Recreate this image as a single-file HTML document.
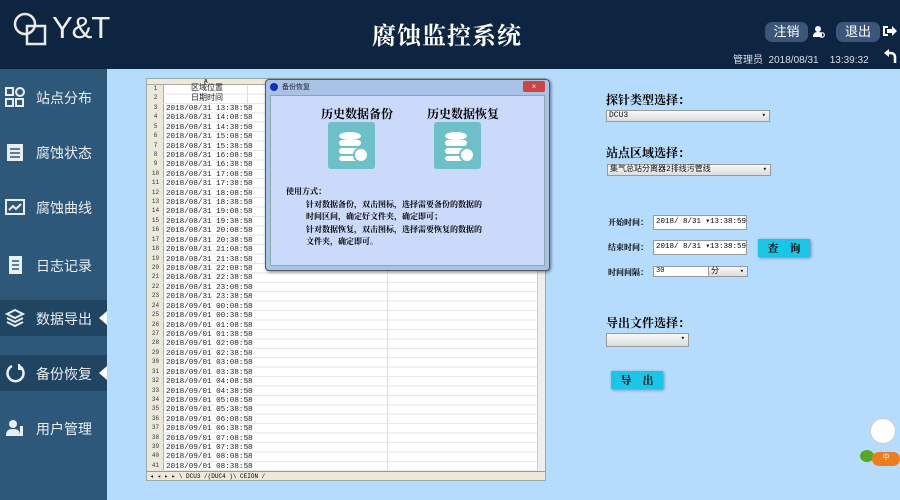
<!DOCTYPE html>
<html><head><meta charset="utf-8"><style>
*{margin:0;padding:0;box-sizing:border-box}
body{width:900px;height:500px;overflow:hidden;position:relative;background:#b5dcfd;font-family:"Liberation Sans","Noto Sans CJK SC",sans-serif}
.hdr{position:absolute;left:0;top:0;width:900px;height:69px;background:#0d2540}
.side{position:absolute;left:0;top:69px;width:107px;height:431px;background:#2d5879}
.item{position:absolute;left:0;width:107px;height:36px;color:#e8eef4;font-size:14px}
.item span{position:absolute;left:36px;top:9px}
.item svg{position:absolute;left:5px;top:8px}
.hl{background:#1f4563}
.arr{position:absolute;right:0;top:11px;width:0;height:0;border-top:7px solid transparent;border-bottom:7px solid transparent;border-right:8px solid #fff}
.sheet{position:absolute;left:146px;top:78px;width:400px;height:403px;background:#fff;border:1px solid #9aa;overflow:hidden}
.dlg{position:absolute;left:265px;top:79px;width:285px;height:192px;background:#a9c3e6;border:1px solid #556;border-radius:4px;box-shadow:1px 1px 3px rgba(0,0,0,.5)}
.dlg .in{position:absolute;left:4px;top:15px;right:4px;bottom:4px;background:#cbd9fb;border:1px solid #8aa}
.ico{position:absolute;width:47px;height:47px;background:#6dbfc8;border-radius:3px}
.lbl{position:absolute;font:bold 12px "Liberation Serif","Noto Serif CJK SC",serif;color:#000;white-space:nowrap}
.sel{position:absolute;height:12px;background:linear-gradient(#f8f8f8,#dcdcdc);border:1px solid #999;font:8px/10px "Liberation Mono","Noto Sans CJK SC",monospace;padding-left:2px;color:#111;white-space:nowrap}
.sel:after{content:"▾";position:absolute;right:3px;top:0;font-size:7px}
.inp{position:absolute;height:15px;background:#fff;border:1px solid #999;font:7.5px/13px "Liberation Mono",monospace;padding-left:2px;white-space:nowrap;overflow:hidden}
.btn{position:absolute;height:18px;background:#19c6e6;box-shadow:1px 1px 3px rgba(0,0,60,.4);font:bold 11px/18px "Noto Serif CJK SC",serif;text-align:center;white-space:nowrap}
.small{position:absolute;font:bold 8px "Noto Serif CJK SC",serif;white-space:nowrap}
pre{font-family:"Liberation Mono","Noto Sans CJK SC",monospace}
</style></head><body>
<div class="hdr">
<svg style="position:absolute;left:13px;top:10px" width="36" height="38" viewBox="0 0 36 38" fill="none" stroke="#e8e8e8" stroke-width="2.5"><circle cx="12" cy="14" r="10"/><rect x="14" y="16" width="18" height="18"/></svg>
<div style="position:absolute;left:52px;top:10px;color:#eee;font-size:31px;letter-spacing:-1px">Y&amp;T</div>
<div style="position:absolute;left:372px;top:16px;color:#fff;font:bold 24px 'Noto Serif CJK SC',serif;letter-spacing:1px">腐蚀监控系统</div>
<div style="position:absolute;left:765px;top:22px;width:43px;height:20px;background:#3b5678;border-radius:7px;color:#fff;font-size:13px;text-align:center;line-height:20px">注销</div>
<svg style="position:absolute;left:813px;top:26px" width="12" height="12" fill="#fff"><circle cx="5" cy="3" r="3"/><path d="M0 11c0-4 2-5 5-5s4 1 4 2v3z"/><circle cx="9" cy="9" r="2.3" fill="none" stroke="#fff" stroke-width="1.2"/></svg>
<div style="position:absolute;left:836px;top:22px;width:44px;height:20px;background:#3b5678;border-radius:7px;color:#fff;font-size:13px;text-align:center;line-height:20px">退出</div>
<svg style="position:absolute;left:883px;top:25px" width="14" height="12" fill="#fff"><path d="M0 1h5v2H2v6h3v2H0z"/><path d="M4 4h5V1l5 5-5 5V8H4z"/></svg>
<div style="position:absolute;left:733px;top:51px;color:#dde;font-size:10px;white-space:nowrap">管理员&nbsp; 2018/08/31 &nbsp;&nbsp; 13:39:32</div>
<svg style="position:absolute;left:883px;top:48px" width="14" height="16" fill="none" stroke="#fff" stroke-width="2.5"><path d="M3 5h5a4 4 0 0 1 4 4v6"/><path d="M1 5l5-4v8z" fill="#fff" stroke="none"/></svg>
</div>
<div class="side">
<div class="item" style="top:10px"><svg width="20" height="20" fill="none" stroke="#e8eef4" stroke-width="2"><rect x="1" y="1" width="7" height="7"/><circle cx="15" cy="5" r="4"/><rect x="1" y="12" width="7" height="7"/><rect x="11" y="12" width="7" height="7"/></svg><span>站点分布</span></div>
<div class="item" style="top:65px"><svg width="20" height="20"><rect x="2" y="2" width="16" height="17" fill="#e8eef4"/><path d="M5 7h10M5 11h10M5 15h10" stroke="#2d5879" stroke-width="1.5"/></svg><span>腐蚀状态</span></div>
<div class="item" style="top:120px"><svg width="20" height="20" fill="none" stroke="#e8eef4" stroke-width="2"><rect x="1" y="3" width="18" height="14"/><path d="M4 13l4-4 3 3 5-5"/></svg><span>腐蚀曲线</span></div>
<div class="item" style="top:178px"><svg width="20" height="20"><rect x="4" y="1" width="13" height="18" fill="#e8eef4"/><path d="M7 6h7M7 10h7M7 14h7" stroke="#2d5879" stroke-width="1.5"/></svg><span>日志记录</span></div>
<div class="item hl" style="top:231px"><svg width="20" height="20" fill="none" stroke="#e8eef4" stroke-width="2"><path d="M10 2l8 4-8 4-8-4z"/><path d="M2 10l8 4 8-4M2 14l8 4 8-4"/></svg><span>数据导出</span><div class="arr"></div></div>
<div class="item hl" style="top:286px"><svg width="20" height="20" fill="none" stroke="#e8eef4" stroke-width="2.5"><path d="M7 3A8 8 0 1 0 14 3"/><path d="M14 1v5h4" stroke-width="2"/></svg><span>备份恢复</span><div class="arr"></div></div>
<div class="item" style="top:341px"><svg width="20" height="20" fill="#e8eef4"><circle cx="8" cy="6" r="4"/><path d="M1 18c0-6 3-7 7-7s7 1 7 7z"/><rect x="15" y="8" width="3" height="10"/></svg><span>用户管理</span></div>
</div>
<div class="sheet">
<div style="position:absolute;left:0;top:0;width:392px;height:6px;background:#ece9d8;border-bottom:1px solid #aaa;font:6px 'Liberation Mono',monospace"><span style="position:absolute;left:57px;top:-1px">A</span></div>
<div style="position:absolute;left:0;top:6px;width:17px;height:386px;background:#ece9d8;border-right:1px solid #aaa"></div>
<div style="position:absolute;left:100px;top:6px;width:1px;height:386px;background:#ddd"></div>
<div style="position:absolute;left:240px;top:6px;width:1px;height:386px;background:#ddd"></div>
<div style="position:absolute;left:0;top:6px;width:392px;height:386px;background:repeating-linear-gradient(transparent 0 8.42px,#e6e6e6 8.42px 9.42px)"></div>
<div style="position:absolute;right:0;top:0;width:8px;height:392px;background:#eee;border-left:1px solid #ccc"></div>
<pre style="position:absolute;left:0;top:5px;width:17px;text-align:center;font-size:6px;line-height:9.42px;color:#333">1
2
3
4
5
6
7
8
9
10
11
12
13
14
15
16
17
18
19
20
21
22
23
24
25
26
27
28
29
30
31
32
33
34
35
36
37
38
39
40
41</pre>
<pre style="position:absolute;left:19px;top:5px;font-size:7.6px;line-height:9.42px;color:#222"><span style="padding-left:25px;font-size:8px">区域位置</span>
<span style="padding-left:25px;font-size:8px">日期时间</span>
2018/08/31 13:38:58
2018/08/31 14:08:58
2018/08/31 14:38:58
2018/08/31 15:08:58
2018/08/31 15:38:58
2018/08/31 16:08:58
2018/08/31 16:38:58
2018/08/31 17:08:58
2018/08/31 17:38:58
2018/08/31 18:08:58
2018/08/31 18:38:58
2018/08/31 19:08:58
2018/08/31 19:38:58
2018/08/31 20:08:58
2018/08/31 20:38:58
2018/08/31 21:08:58
2018/08/31 21:38:58
2018/08/31 22:08:58
2018/08/31 22:38:58
2018/08/31 23:08:58
2018/08/31 23:38:58
2018/09/01 00:08:58
2018/09/01 00:38:58
2018/09/01 01:08:58
2018/09/01 01:38:58
2018/09/01 02:08:58
2018/09/01 02:38:58
2018/09/01 03:08:58
2018/09/01 03:38:58
2018/09/01 04:08:58
2018/09/01 04:38:58
2018/09/01 05:08:58
2018/09/01 05:38:58
2018/09/01 06:08:58
2018/09/01 06:38:58
2018/09/01 07:08:58
2018/09/01 07:38:58
2018/09/01 08:08:58
2018/09/01 08:38:58</pre>
<div style="position:absolute;left:0;top:392px;width:398px;height:10px;background:#ece9d8;border-top:1px solid #999;font:6px/9px 'Liberation Mono',monospace;padding-left:3px;white-space:nowrap">◂ ◂ ▸ ▸ \ DCU3 /(DUC4 )\ CEION /</div>
</div>
<div class="dlg">
<div style="position:absolute;left:4px;top:3px;width:8px;height:8px;border-radius:50%;background:#1030c0"></div>
<div style="position:absolute;left:16px;top:2px;font-size:7px;color:#223">备份恢复</div>
<div style="position:absolute;right:4px;top:1px;width:22px;height:11px;background:#c44;border-radius:2px;color:#fff;font-size:8px;text-align:center;line-height:11px">×</div>
<div class="in">
<div class="lbl" style="left:50px;top:9px">历史数据备份</div>
<div class="lbl" style="left:156px;top:9px">历史数据恢复</div>
<div class="ico" style="left:57px;top:26px"><svg width="47" height="47"><g fill="#fff"><ellipse cx="22" cy="14" rx="11" ry="4"/><rect x="11" y="18" width="22" height="6" rx="3"/><rect x="11" y="26" width="22" height="6" rx="3"/><rect x="11" y="34" width="22" height="5" rx="3"/><circle cx="33" cy="33" r="7" stroke="#6dbfc8" stroke-width="2"/></g></svg></div>
<div class="ico" style="left:163px;top:26px"><svg width="47" height="47"><g fill="#fff"><ellipse cx="22" cy="14" rx="11" ry="4"/><rect x="11" y="18" width="22" height="6" rx="3"/><rect x="11" y="26" width="22" height="6" rx="3"/><rect x="11" y="34" width="22" height="5" rx="3"/><circle cx="33" cy="33" r="7" stroke="#6dbfc8" stroke-width="2"/></g></svg></div>
<div style="position:absolute;left:15px;top:90px;font:bold 8px/12.5px 'Noto Serif CJK SC',serif;color:#000;white-space:nowrap">使用方式：<br>
<span style="padding-left:20px">针对数据备份，双击图标，选择需要备份的数据的</span><br>
<span style="padding-left:20px">时间区间，确定好文件夹，确定即可；</span><br>
<span style="padding-left:20px">针对数据恢复，双击图标，选择需要恢复的数据的</span><br>
<span style="padding-left:20px">文件夹，确定即可。</span></div>
</div></div>
<div class="lbl" style="left:606px;top:91px">探针类型选择：</div>
<div class="sel" style="left:606px;top:110px;width:164px">DCU3</div>
<div class="lbl" style="left:606px;top:144px">站点区域选择：</div>
<div class="sel" style="left:607px;top:164px;width:164px">集气总站分离器2排线污管线</div>
<div class="small" style="left:608px;top:217px">开始时间：</div>
<div class="inp" style="left:653px;top:215px;width:94px">2018/ 8/31 ▾13:38:59</div>
<div class="small" style="left:608px;top:242px">结束时间：</div>
<div class="inp" style="left:653px;top:240px;width:94px">2018/ 8/31 ▾13:38:59</div>
<div class="btn" style="left:758px;top:239px;width:52px">查&nbsp;&nbsp;&nbsp;&nbsp;询</div>
<div class="small" style="left:608px;top:267px">时间间隔：</div>
<div class="inp" style="left:653px;top:266px;width:58px;height:11px;font-size:7px;line-height:9px">30</div>
<div class="sel" style="left:708px;top:266px;width:40px;height:11px">分</div>
<div class="lbl" style="left:606px;top:314px">导出文件选择：</div>
<div class="sel" style="left:606px;top:333px;width:83px;height:14px"></div>
<div class="btn" style="left:611px;top:371px;width:52px">导&nbsp;&nbsp;&nbsp;&nbsp;出</div>
<div style="position:absolute;left:870px;top:418px;width:26px;height:26px;border-radius:50%;background:#fff;border:1px solid #ccc"></div>
<div style="position:absolute;left:860px;top:450px;width:14px;height:12px;border-radius:50%;background:#5a2"></div>
<div style="position:absolute;left:872px;top:452px;width:28px;height:14px;border-radius:7px;background:#f07b1c;color:#fff;font-size:7px;text-align:center">中</div>
</body></html>
